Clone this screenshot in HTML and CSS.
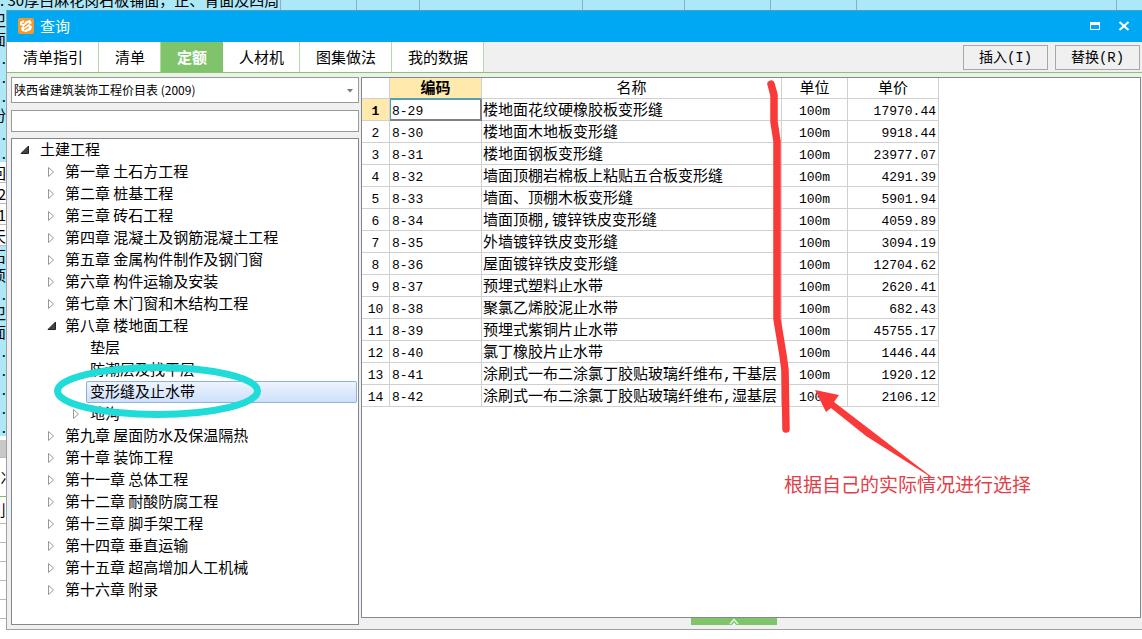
FILE: index.html
```html
<!DOCTYPE html>
<html lang="zh-CN">
<head>
<meta charset="utf-8">
<meta name="viewport" content="width=device-width, initial-scale=1">
<title>查询</title>
<link rel="stylesheet" href="styles.css">
</head>
<body>
<svg class="defs" aria-hidden="true">
  <symbol id="closed" viewBox="0 0 10 12"><path d="M1.5 1.5V10.5L6.5 6Z" fill="#fff" stroke="#999"/></symbol>
  <symbol id="open" viewBox="0 0 10 12"><path d="M8.5 2V9.5H1Z" fill="#444" stroke="#222"/></symbol>
</svg>
<div class="desktop">
  <div class="sheet-top">
    <span class="cell c-text">. 30厚白麻花岗石板铺面，正、背面及四周</span><span class="cell c76"></span><span class="cell c63"></span><span class="cell c163"></span><span class="cell c102"></span><span class="cell c86"></span><span class="cell c86"></span><span class="cell c260"></span><span class="cell rest"></span>
  </div>
  <div class="sheet-left">
    <div class="block blue"><span>卫</span><span>面</span><span>.</span><span>.</span><span>.</span><span>份</span><span>.</span><span>.</span></div>
    <div class="block plain"><span>回</span><span>2</span><span>1</span><span>天</span></div>
    <div class="block blue"><span>石</span><span>项</span><span>.</span><span>卫</span><span>面</span><span>.</span><span>.</span><span>.</span><span>.</span><span>.</span></div>
    <div class="block tail"><i class="grey"></i><span class="tall">冫</span><span class="green">刂</span><i></i><i></i><i></i><i></i><i></i></div>
  </div>
  <main class="dialog">
    <header class="titlebar">
      <svg class="logo" viewBox="0 0 16 16" aria-hidden="true"><rect width="16" height="16" rx="2" fill="#f49a2c"/><path d="M2 4L6 2L6 4L12 2L14 5L11 7L14 8L13 12L8 14L4 13L3 10L5 8L2 7Z" fill="#fff"/><path d="M4 6L7 4.500M6 9L11 5M6 12L11 9" stroke="#f49a2c" stroke-width="1.200"/></svg>
      <h1>查询</h1>
      <button class="win" aria-label="还原"><svg viewBox="0 0 12 12"><path d="M1 3.5H11M1.5 3V9.500H10.500V3" fill="none" stroke="#fff"/><path d="M1 2H11V5H1Z" fill="#fff"/></svg></button>
      <button class="win" aria-label="关闭"><svg viewBox="0 0 12 12"><path d="M1.500 2L10.500 10M10.500 2L1.500 10" stroke="#fff" stroke-width="2"/></svg></button>
    </header>
    <nav class="toolbar">
      <button class="tab">清单指引</button><button class="tab">清单</button><button class="tab active">定额</button><button class="tab">人材机</button><button class="tab">图集做法</button><button class="tab">我的数据</button>
      <div class="actions"><button class="act">插入(I)</button><button class="act">替换(R)</button></div>
    </nav>
    <div class="content">
      <aside class="side">
        <div class="combo">
          <select aria-label="定额库"><option>陕西省建筑装饰工程价目表 (2009)</option></select>
          <svg viewBox="0 0 6 4" aria-hidden="true"><path d="M0 0H6L3 3.500Z" fill="#777"/></svg>
        </div>
        <input class="search" type="text" aria-label="搜索">
        <div class="treebox">
          <ul class="tree">
            <li><div class="node"><button aria-label="折叠"><svg><use href="#open"/></svg></button><span>土建工程</span></div>
              <ul>
                <li><div class="node"><button aria-label="展开"><svg><use href="#closed"/></svg></button><span>第一章 土石方工程</span></div></li>
                <li><div class="node"><button aria-label="展开"><svg><use href="#closed"/></svg></button><span>第二章 桩基工程</span></div></li>
                <li><div class="node"><button aria-label="展开"><svg><use href="#closed"/></svg></button><span>第三章 砖石工程</span></div></li>
                <li><div class="node"><button aria-label="展开"><svg><use href="#closed"/></svg></button><span>第四章 混凝土及钢筋混凝土工程</span></div></li>
                <li><div class="node"><button aria-label="展开"><svg><use href="#closed"/></svg></button><span>第五章 金属构件制作及钢门窗</span></div></li>
                <li><div class="node"><button aria-label="展开"><svg><use href="#closed"/></svg></button><span>第六章 构件运输及安装</span></div></li>
                <li><div class="node"><button aria-label="展开"><svg><use href="#closed"/></svg></button><span>第七章 木门窗和木结构工程</span></div></li>
                <li><div class="node"><button aria-label="折叠"><svg><use href="#open"/></svg></button><span>第八章 楼地面工程</span></div>
                  <ul>
                    <li><div class="node leaf"><span>垫层</span></div></li>
                    <li><div class="node leaf"><span>防潮层及找平层</span></div></li>
                    <li><div class="node leaf"><span class="selected">变形缝及止水带</span></div></li>
                    <li><div class="node"><button aria-label="展开"><svg><use href="#closed"/></svg></button><span>地沟</span></div></li>
                  </ul>
                </li>
                <li><div class="node"><button aria-label="展开"><svg><use href="#closed"/></svg></button><span>第九章 屋面防水及保温隔热</span></div></li>
                <li><div class="node"><button aria-label="展开"><svg><use href="#closed"/></svg></button><span>第十章 装饰工程</span></div></li>
                <li><div class="node"><button aria-label="展开"><svg><use href="#closed"/></svg></button><span>第十一章 总体工程</span></div></li>
                <li><div class="node"><button aria-label="展开"><svg><use href="#closed"/></svg></button><span>第十二章 耐酸防腐工程</span></div></li>
                <li><div class="node"><button aria-label="展开"><svg><use href="#closed"/></svg></button><span>第十三章 脚手架工程</span></div></li>
                <li><div class="node"><button aria-label="展开"><svg><use href="#closed"/></svg></button><span>第十四章 垂直运输</span></div></li>
                <li><div class="node"><button aria-label="展开"><svg><use href="#closed"/></svg></button><span>第十五章 超高增加人工机械</span></div></li>
                <li><div class="node"><button aria-label="展开"><svg><use href="#closed"/></svg></button><span>第十六章 附录</span></div></li>
              </ul>
            </li>
          </ul>
        </div>
      </aside>
      <section class="result">
        <div class="grid">
          <table>
            <colgroup><col class="k-no"><col class="k-code"><col class="k-name"><col class="k-unit"><col class="k-price"></colgroup>
            <thead><tr><th></th><th class="hot">编码</th><th>名称</th><th>单位</th><th>单价</th></tr></thead>
            <tbody>
              <tr class="current"><td>1</td><td>8-29</td><td>楼地面花纹硬橡胶板变形缝</td><td>100m</td><td>17970.44</td></tr>
              <tr><td>2</td><td>8-30</td><td>楼地面木地板变形缝</td><td>100m</td><td>9918.44</td></tr>
              <tr><td>3</td><td>8-31</td><td>楼地面钢板变形缝</td><td>100m</td><td>23977.07</td></tr>
              <tr><td>4</td><td>8-32</td><td>墙面顶棚岩棉板上粘贴五合板变形缝</td><td>100m</td><td>4291.39</td></tr>
              <tr><td>5</td><td>8-33</td><td>墙面、顶棚木板变形缝</td><td>100m</td><td>5901.94</td></tr>
              <tr><td>6</td><td>8-34</td><td>墙面顶棚,镀锌铁皮变形缝</td><td>100m</td><td>4059.89</td></tr>
              <tr><td>7</td><td>8-35</td><td>外墙镀锌铁皮变形缝</td><td>100m</td><td>3094.19</td></tr>
              <tr><td>8</td><td>8-36</td><td>屋面镀锌铁皮变形缝</td><td>100m</td><td>12704.62</td></tr>
              <tr><td>9</td><td>8-37</td><td>预埋式塑料止水带</td><td>100m</td><td>2620.41</td></tr>
              <tr><td>10</td><td>8-38</td><td>聚氯乙烯胶泥止水带</td><td>100m</td><td>682.43</td></tr>
              <tr><td>11</td><td>8-39</td><td>预埋式紫铜片止水带</td><td>100m</td><td>45755.17</td></tr>
              <tr><td>12</td><td>8-40</td><td>氯丁橡胶片止水带</td><td>100m</td><td>1446.44</td></tr>
              <tr><td>13</td><td>8-41</td><td>涂刷式一布二涂氯丁胶贴玻璃纤维布,干基层</td><td>100m</td><td>1920.12</td></tr>
              <tr><td>14</td><td>8-42</td><td>涂刷式一布二涂氯丁胶贴玻璃纤维布,湿基层</td><td>100m</td><td>2106.12</td></tr>
            </tbody>
          </table>
        </div>
        <button class="handle" aria-label="展开面板"><svg viewBox="0 0 10 7"><path d="M1 6L5 1.500L9 6" fill="none" stroke="#dff0d8" stroke-width="1.500"/><path d="M3 7L5 4.500L7 7Z" fill="#fff"/></svg></button>
      </section>
    </div>
  </main>
  <svg class="marks" width="1142" height="639" viewBox="0 0 1142 639" aria-hidden="true">
    <ellipse cx="157.500" cy="391" rx="100" ry="23.500" fill="none" stroke="#1fdcd8" stroke-width="7"/>
    <path d="M771 84L774 95V122L777 141V319L783 355L785 370L786 429" fill="none" stroke="#fa3939" stroke-width="7.500" stroke-linecap="round" stroke-linejoin="round"/>
    <path d="M815 390L839 395L834 402L937 481L866 436L831 408L826 412Z" fill="#fa3939"/>
  </svg>
  <p class="note">根据自己的实际情况进行选择</p>
</div>
</body>
</html>
```
FILE: styles.css
```css
* { box-sizing: border-box; }
body {
  margin: 0;
  background: #fff;
  color: #000;
  font: 15px/22px "Liberation Mono", "Noto Sans CJK SC", monospace;
}
button, input, select { font: inherit; color: inherit; margin: 0; padding: 0; border: 0; border-radius: 0; background: none; }
ul { list-style: none; margin: 0; padding: 0; }
.defs { position: absolute; width: 0; height: 0; }

.desktop {
  position: relative;
  display: grid;
  grid-template-columns: 6px minmax(0, 1fr);
  grid-template-rows: 10px minmax(0, 1fr);
  height: 100vh;
  padding-bottom: 9px;
  overflow: hidden;
}

/* spreadsheet behind the dialog */
.sheet-top {
  grid-column: 1 / 3;
  display: flex;
  background: #ade8f8;
  overflow: hidden;
  font-family: "Noto Sans CJK SC", sans-serif;
}
.cell { flex: none; border-right: 1px solid #8ab0bd; }
.c-text { width: 281px; line-height: 15px; white-space: nowrap; align-self: flex-end; height: 18px; }
.c76 { width: 76px; }
.c63 { width: 63px; }
.c163 { width: 163px; }
.c102 { width: 102px; }
.c86 { width: 86px; }
.c260 { width: 260px; }
.rest { flex: 1; border: 0; }
.sheet-left { overflow: hidden; font-family: "Noto Sans CJK SC", sans-serif; }
.block { display: flex; flex-direction: column; overflow: hidden; }
.block span { display: flex; justify-content: flex-end; line-height: 19px; }
.blue { background: #ade8f8; }
.plain span { line-height: 21px; height: 21px; border-bottom: 1px solid #bbb; }
.tail i { height: 19px; flex: none; border-bottom: 1px solid #bbb; }
.tail .grey { background: #c8c8c8; height: 18px; margin-top: 4px; }
.tail .tall { line-height: 38px; justify-content: flex-start; }
.tail .green { border-top: 1px solid #7fc068; border-bottom: 1px solid #bbb; line-height: 26px; }

.dialog {
  display: flex;
  flex-direction: column;
  border: 1px solid #a0a0a0;
  border-top-color: #4f9fc0;
  border-right: 0;
  background: #f0f0f0;
  min-height: 0;
}
.titlebar { display: flex; align-items: center; height: 31px; flex: none; background: #00a8f3; padding: 0 8px 2px 11px; color: #fff; }
.logo { width: 16px; height: 16px; margin-right: 6px; }
h1 { margin: 0; flex: 1; font: 15px/22px "Noto Sans CJK SC", sans-serif; }
.win { width: 20px; height: 20px; margin-left: 9px; display: grid; place-items: center; }
.win svg { width: 12px; height: 12px; }

.toolbar { display: flex; flex: none; height: 31px; border-bottom: 1px solid #8fbf80; }
.tab { padding: 6px 15px 0 16px; border-right: 1px solid #b5dba5; background: #fff; }
.tab.active { background: #7fc46a; border-color: #7fc46a; color: #fff; font-weight: bold; }
.actions { display: flex; gap: 7px; margin-left: auto; padding: 3px 2px 2px 0; }
.act { width: 85px; border: 1px solid #a8a8a8; font-size: 14px; }

.content {
  flex: 1;
  min-height: 0;
  display: grid;
  grid-template-columns: 348px minmax(0, 1fr);
  gap: 2px;
  padding: 4px 1px 4px 4px;
  background: linear-gradient(#e8f3e4 4px, #f0f0f0 4px);
}
.side { display: flex; flex-direction: column; min-height: 0; font-family: "Noto Sans CJK SC", sans-serif; }
.combo { position: relative; flex: none; height: 26px; border: 1px solid #999; background: #fff; }
.combo select { width: 100%; height: 100%; appearance: none; padding-left: 2px; font-size: 12px; }
.combo svg { position: absolute; right: 5px; top: 11px; width: 6px; height: 4px; pointer-events: none; }
.search { flex: none; height: 22px; margin: 7px 0 6px; border: 1px solid #999; background: #fff; }
.treebox { flex: 1; min-height: 0; border: 1px solid #828790; background: #fff; overflow: hidden; }
.tree { padding-left: 7px; }
.tree ul { padding-left: 25px; }
.node { display: flex; height: 22px; }
.node button { width: 19px; flex: none; display: flex; align-items: center; padding-left: 3px; }
.tree > li > .node button { padding-left: 1px; }
.node svg { width: 10px; height: 12px; }
.node span { flex: 1; white-space: nowrap; line-height: 18px; padding-left: 1px; border: 1px solid transparent; margin-right: 1px; }
.node.leaf { padding-left: 17px; }
.node.leaf span { padding-left: 3px; }
.node .selected { border-color: #8fb2d8; border-radius: 2px; background: linear-gradient(#edf4fd, #cde0fb); }

.result { display: flex; flex-direction: column; min-height: 0; }
.grid { flex: 1; min-height: 0; overflow: hidden; border: 1px solid #828790; background: #fff; }
.handle { flex: none; width: 86px; height: 7px; margin-left: 330px; background: #7fc46a; display: flex; justify-content: center; }
.handle svg { width: 10px; height: 7px; }
table { width: 577px; table-layout: fixed; border-spacing: 0; }
.k-no { width: 28px; }
.k-code { width: 92px; }
.k-name { width: 300px; }
.k-unit { width: 66px; }
.k-price { width: 91px; }
th, td { border: 0 solid #d0d0d0; border-width: 0 1px 1px 0; white-space: nowrap; }
th { height: 21px; line-height: 16px; padding: 4px 0 0; font-weight: normal; }
th.hot { background: #ffe9ad; font-weight: bold; border-bottom-color: #5a9fb0; }
td { height: 22px; line-height: 17px; padding: 4px 2px 0; font-size: 13px; }
td:nth-child(3) { font-size: 15px; padding-left: 1px; }
td:nth-child(1), td:nth-child(4) { text-align: center; padding: 4px 0 0; }
td:nth-child(5) { text-align: right; }
.current td:first-child { background: #ffe9ad; font-weight: bold; }
.current td:nth-child(2) { box-shadow: inset 1px 1px #4aa3b8, inset -1px -1px #808080; border-color: #808080; }

/* hand-drawn annotations lie over the dialog */
.marks { position: absolute; left: 0; top: 0; pointer-events: none; }
.note { position: absolute; left: 784px; top: 476px; margin: 0; font-size: 19px; color: #e23e48; white-space: nowrap; }
```
